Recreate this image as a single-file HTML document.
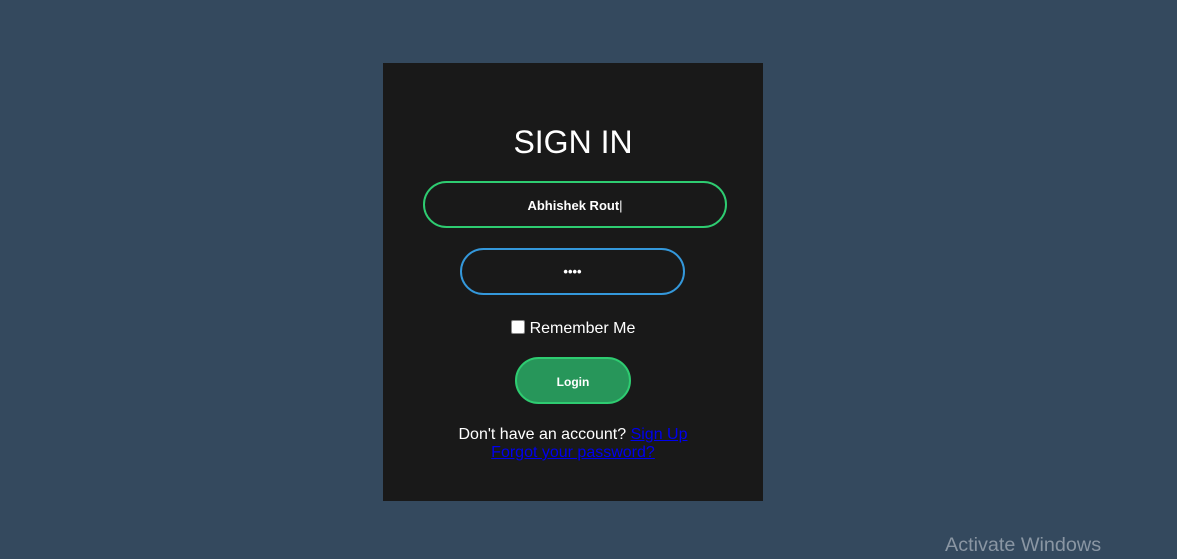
<!DOCTYPE html>
<html><head><style>
body{margin:0;width:1177px;height:559px;background:#34495e;font-family:"Liberation Sans",Arial,sans-serif;position:relative;overflow:hidden}
.box{position:absolute;left:383px;top:63px;width:380px;height:438px;background:#191919}
.t{position:absolute;left:0;width:380px;text-align:center;color:#fff}
.in{position:absolute;box-sizing:border-box;border-radius:24px;text-align:center;color:#fff;font-size:13px;font-weight:bold}
a{color:#00e;text-decoration:underline;text-decoration-color:#00e}
.wm{position:absolute;left:945px;top:534px;color:#8a96a3;font-size:19.8px}
</style></head><body>
<div class="box">
<div class="t" style="top:60px;font-size:32px;line-height:38px">SIGN IN</div>
<div class="in" style="left:40px;top:118px;width:304px;height:47px;border:2px solid #2ecc71;line-height:45px">Abhishek Rout<span style="font-weight:normal">|</span></div>
<div class="in" style="left:77px;top:185px;width:225px;height:47px;border:2px solid #3498db;line-height:43px">••••</div>
<div class="t" style="top:256px;font-size:16px;line-height:20px"><span style="display:inline-block;width:14px;height:14px;background:#fff;border-radius:2px;vertical-align:-1px;margin-right:5px;border:1px solid #888;box-sizing:border-box"></span>Remember Me</div>
<div class="in" style="left:132px;top:294px;width:116px;height:47px;border:2px solid #2ecc71;background:#27965a;line-height:46px;font-size:12px">Login</div>
<div class="t" style="top:363px;font-size:16px;line-height:18px">Don't have an account? <a>Sign Up</a><br><a>Forgot your password?</a></div>
</div>
<div class="wm">Activate Windows</div>
</body></html>
